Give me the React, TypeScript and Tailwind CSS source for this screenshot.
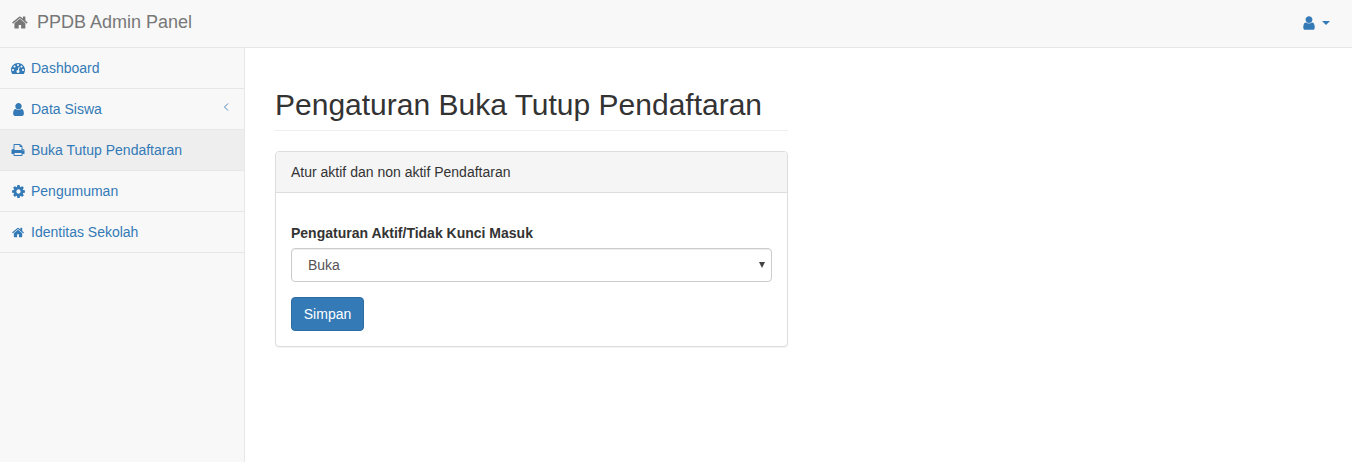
type IconName = 'dashboard' | 'user' | 'print' | 'cog' | 'home';

// Font Awesome 4 glyphs, the 5 set in react-icons draws them differently
const iconPaths: Record<IconName, string> = {
  dashboard:
    'M384 1152q0-53-37.500-90.500t-90.500-37.500-90.500 37.500-37.500 90.500 37.500 90.500 90.500 37.500 90.500-37.500 37.500-90.500zm192-448q0-53-37.500-90.500t-90.500-37.500-90.500 37.500-37.500 90.500 37.500 90.500 90.500 37.500 90.500-37.500 37.500-90.500zm428 481l101-382q6-26-7.500-48.500t-38.500-29.500-48 6.500-30 39.500l-101 382q-60 5-107 43.500t-63 98.500q-20 77 20 146t117 89 146-20 89-117q16-60-6-117t-72-91zm660-33q0-53-37.500-90.500t-90.500-37.500-90.500 37.500-37.500 90.500 37.500 90.500 90.500 37.500 90.500-37.500 37.500-90.500zm-640-640q0-53-37.500-90.500t-90.500-37.500-90.500 37.500-37.500 90.500 37.500 90.500 90.500 37.500 90.500-37.500 37.500-90.500zm448 192q0-53-37.500-90.500t-90.500-37.500-90.500 37.500-37.500 90.500 37.500 90.500 90.500 37.500 90.500-37.500 37.500-90.500zm320 448q0 261-141 483-19 29-54 29h-1402q-35 0-54-29-141-221-141-483 0-182 71-348t191-286 286-191 348-71 348 71 286 191 191 286 71 348z',
  user: 'M1536 1399q0 109-62.500 187t-150.500 78h-854q-88 0-150.500-78t-62.500-187q0-85 8.500-160.500t31.500-152 58.500-131 94-89 134.500-34.500q131 128 313 128t313-128q76 0 134.500 34.500t94 89 58.500 131 31.500 152 8.500 160.500zm-256-887q0 159-112.500 271.500t-271.500 112.500-271.500-112.500-112.500-271.500 112.500-271.500 271.500-112.500 271.500 112.500 112.500 271.500z',
  print:
    'M448 1536h896v-256h-896v256zm0-640h896v-384h-160q-40 0-68-28t-28-68v-160h-640v640zm1152 64q0-26-19-45t-45-19-45 19-19 45 19 45 45 19 45-19 19-45zm128 0v416q0 13-9.500 22.500t-22.500 9.500h-224v160q0 40-28 68t-68 28h-960q-40 0-68-28t-28-68v-160h-224q-13 0-22.500-9.500t-9.500-22.500v-416q0-79 56.500-135.500t135.500-56.500h64v-544q0-40 28-68t68-28h672q40 0 88 20t76 48l152 152q28 28 48 76t20 88v256h64q79 0 135.500 56.500t56.500 135.500z',
  cog: 'M1152 896q0-106-75-181t-181-75-181 75-75 181 75 181 181 75 181-75 75-181zm512-109v222q0 12-8 23t-20 13l-185 28q-19 54-39 91 35 50 107 138 10 12 10 25t-9 23q-27 37-99 108t-94 71q-12 0-26-9l-138-108q-44 23-91 38-16 136-29 186-7 28-36 28h-222q-14 0-24.500-8.500t-11.500-21.500l-28-184q-49-16-90-37l-141 107q-10 9-25 9-14 0-25-11-126-114-165-168-7-10-7-23 0-12 8-23 15-21 51-66.500t54-70.500q-27-50-41-99l-183-27q-13-2-21-12.500t-8-23.500v-222q0-12 8-23t19-13l186-28q14-46 39-92-40-57-107-138-10-12-10-24 0-10 9-23 26-36 98.500-107.500t94.500-71.500q13 0 26 10l138 107q44-23 91-38 16-136 29-186 7-28 36-28h222q14 0 24.500 8.500t11.500 21.500l28 184q49 16 90 37l142-107q9-9 24-9 13 0 25 10 129 119 165 170 7 8 7 22 0 12-8 23-15 21-51 66.500t-54 70.500q26 50 41 98l183 28q13 2 21 12.500t8 23.500z',
  home: 'M1408 992v480q0 26-19 45t-45 19h-384v-384h-256v384h-384q-26 0-45-19t-19-45v-480q0-1 .5-3t.5-3l575-474 575 474q1 2 1 6zm223-69l-62 74q-8 9-21 11h-3q-13 0-21-7l-692-577-692 577q-12 8-24 7-13-2-21-11l-62-74q-8-10-7-23.500t11-21.500l719-599q32-26 76-26t76 26l244 204v-195q0-14 9-23t23-9h192q14 0 23 9t9 23v408l219 182q10 8 11 21.500t-7 23.500z'
};

const FaIcon = ({ name, className }: { name: IconName; className?: string }) => (
  <svg viewBox="0 0 1792 1792" fill="currentColor" className={className}>
    <path d={iconPaths[name]} />
  </svg>
);

interface MenuItem {
  label: string;
  icon: IconName;
  iconClass: string;
  active?: boolean;
  hasChildren?: boolean;
}

const menuItems: MenuItem[] = [
  { label: 'Dashboard', icon: 'dashboard', iconClass: 'h-[14px] w-[14px]' },
  { label: 'Data Siswa', icon: 'user', iconClass: 'h-[15px] w-[15px]', hasChildren: true },
  { label: 'Buka Tutup Pendaftaran', icon: 'print', iconClass: 'h-[14px] w-[14px]' , active: true },
  { label: 'Pengumuman', icon: 'cog', iconClass: 'h-[15px] w-[15px]' },
  { label: 'Identitas Sekolah', icon: 'home', iconClass: 'ml-[0.500px] h-[13px] w-[13px]' }
];

const Navbar = () => (
  <nav className="flex h-[48px] items-center justify-between border-b border-[#e7e7e7] bg-[#f8f8f8] pb-[2px] pl-[12px] pr-[22px]">
    <div className="flex items-center text-[18px] text-[#777777]">
      <FaIcon name="home" className="mr-[8px] h-[17px] w-[17px]" />
      <span>PPDB Admin Panel</span>
    </div>
    <div className="flex items-center text-[#337ab7]">
      <FaIcon name="user" className="h-[16px] w-[16px]" />
      <span className="ml-[5px] h-0 w-0 border-x-[4px] border-t-[4px] border-x-transparent border-t-[#337ab7]" />
    </div>
  </nav>
);

const Sidebar = () => (
  <aside className="w-[245px] shrink-0 border-r border-[#e7e7e7] bg-[#f8f8f8]">
    <ul>
      {menuItems.map((item) => (
        <li
          key={item.label}
          className={`flex h-[41px] items-center border-b border-[#e7e7e7] pl-[11px] pr-[13px] text-[14px] text-[#337ab7] ${
            item.active ? 'bg-[#eeeeee]' : ''
          }`}
        >
          <span className="flex w-[20px] shrink-0">
            <FaIcon name={item.icon} className={item.iconClass} />
          </span>
          <span className="flex-1">{item.label}</span>
          {item.hasChildren && (
            <svg viewBox="0 0 8 10" fill="none" stroke="#4f86b8" strokeWidth="1" className="mb-[5px] h-[10px] w-[8px]">
              <path d="M5 1.500 L1.500 5 L5 8.500" />
            </svg>
          )}
        </li>
      ))}
    </ul>
  </aside>
);

const Panel = () => (
  <div className="rounded-[4px] border border-[#dddddd] bg-white shadow-[0_1px_1px_rgba(0,0,0,0.05)]">
    <div className="flex h-[41px] items-center rounded-t-[3px] border-b border-[#dddddd] bg-[#f5f5f5] px-[15px] text-[14px] text-[#333333]">
      Atur aktif dan non aktif Pendaftaran
    </div>
    <div className="px-[15px] pb-[15px] pt-[30px]">
      <label className="mb-[5px] block text-[14px] font-bold leading-[20px] text-[#333333]">
        Pengaturan Aktif/Tidak Kunci Masuk
      </label>
      <div className="relative">
        <select className="h-[34px] w-full appearance-none rounded-[4px] border border-[#cccccc] bg-white pl-[16px] text-[14px] text-[#555555] shadow-[inset_0_1px_1px_rgba(0,0,0,0.075)]">
          <option>Buka</option>
          <option>Tutup</option>
        </select>
        <span className="pointer-events-none absolute right-[7px] top-[14px] h-0 w-0 border-x-[3px] border-t-[6px] border-x-transparent border-t-[#444444]" />
      </div>
      <button
        type="button"
        className="mt-[15px] block h-[34px] w-[73px] rounded-[4px] border border-[#2e6da4] bg-[#337ab7] text-[14px] text-white"
      >
        Simpan
      </button>
    </div>
  </div>
);

export default function App() {
  return (
    <div className="flex h-[462px] flex-col overflow-hidden bg-white font-['Liberation_Sans',Arial,sans-serif]">
      <Navbar />
      <div className="flex flex-1">
        <Sidebar />
        <main className="w-[573px] px-[30px]">
          <h1 className="mt-[40px] border-b border-[#eeeeee] pb-[9px] text-[30px] leading-[33px] text-[#333333]">
            Pengaturan Buka Tutup Pendaftaran
          </h1>
          <div className="mt-[20px]">
            <Panel />
          </div>
        </main>
      </div>
    </div>
  );
}
